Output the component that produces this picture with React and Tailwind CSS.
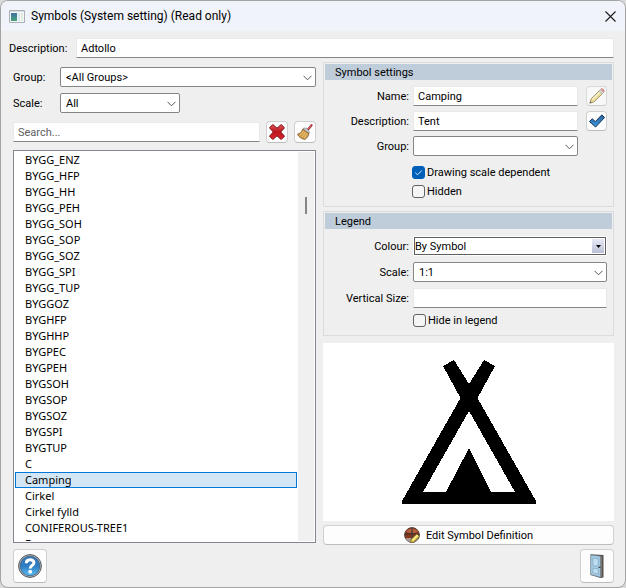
import { useState } from "react";

const names = [
  "BYGG_ENZ", "BYGG_HFP", "BYGG_HH", "BYGG_PEH", "BYGG_SOH", "BYGG_SOP",
  "BYGG_SOZ", "BYGG_SPI", "BYGG_TUP", "BYGGOZ", "BYGHFP", "BYGHHP", "BYGPEC",
  "BYGPEH", "BYGSOH", "BYGSOP", "BYGSOZ", "BYGSPI", "BYGTUP", "C", "Camping",
  "Cirkel", "Cirkel fylld", "CONIFEROUS-TREE1", "Ensam",
];

function Label({ className = "", ...props }) {
  return <label className={`pt-[2px] ${className}`} {...props} />;
}

function TextField({ className = "", ...props }) {
  return (
    <input
      type="text"
      className={`h-5 min-w-0 border border-[#e9e9e9] border-b-[#868686] bg-white px-1 text-black outline-none placeholder:text-[#606060] ${className}`}
      {...props}
    />
  );
}

function Select({ id, options = [], className = "" }) {
  return (
    <span className={`relative flex h-5 ${className}`}>
      <select
        id={id}
        className="w-full appearance-none rounded-[2px] border border-[#858585] bg-white pt-px pr-5 pl-[5px] leading-4 text-black outline-none"
      >
        {options.map((o) => (
          <option key={o}>{o}</option>
        ))}
      </select>
      <svg className="pointer-events-none absolute top-2 right-1 h-[6px] w-[9px]" viewBox="0 0 9 6" fill="none" stroke="#555">
        <path d="M.5 .8 4.5 4.8 8.5 .8" />
      </svg>
    </span>
  );
}

function Check({ label, defaultChecked }) {
  return (
    <label className="flex h-[19px] items-center gap-[2px]">
      <span className="relative flex size-[13px]">
        <input
          type="checkbox"
          defaultChecked={defaultChecked}
          className="peer size-[13px] appearance-none rounded-[3px] border border-[#626262] bg-[#f5f5f5] checked:border-[#005fb8] checked:bg-[#005fb8]"
        />
        <svg className="pointer-events-none absolute inset-0 hidden size-[13px] peer-checked:block" viewBox="0 0 13 13" fill="none" stroke="#d9ecff">
          <path d="M3.3 6.7 5.5 8.8 9.8 4.5" />
        </svg>
      </span>
      <span className="pt-px">{label}</span>
    </label>
  );
}

function IconButton({ label, className = "", children }) {
  return (
    <button
      type="button"
      aria-label={label}
      className={`flex shrink-0 items-center justify-center rounded-[4px] border border-[#d0d0d0] border-b-[#bdbdbd] bg-[#fdfdfd] ${className}`}
    >
      {children}
    </button>
  );
}

function Panel({ title, className = "", children }) {
  return (
    <section className={`shrink-0 border border-[#dcdcdc] p-px ${className}`}>
      <h2 className="h-4 bg-[#bfcddb] pl-[10px] leading-[18px]">{title}</h2>
      {children}
    </section>
  );
}

function AppIcon() {
  return (
    <svg className="h-[13px] w-4" viewBox="0 0 16 13">
      <defs>
        <linearGradient id="app" x2="0" y2="1">
          <stop stopColor="#3f73a3" />
          <stop offset="1" stopColor="#46a178" />
        </linearGradient>
      </defs>
      <path d="M.5 .5h15v12H.5z" fill="#f4f6f7" stroke="#a9b1b7" />
      <path d="M1 1h14v1H1z" fill="#d5dde3" />
      <path d="M2 3h6v8H2z" fill="url(#app)" />
      <path d="M9 3h2v8H9z" fill="#d7e6ee" />
      <path d="M12 3h2v8h-2z" fill="#deeedb" />
    </svg>
  );
}

function DeleteIcon() {
  return (
    <svg className="size-4" viewBox="0 0 16 16">
      <defs>
        <linearGradient id="del" x2="0" y2="1">
          <stop stopColor="#dc5a5a" />
          <stop offset=".5" stopColor="#bd141b" />
          <stop offset="1" stopColor="#e02a32" />
        </linearGradient>
      </defs>
      <path d="M3.800 .5 8 4.200 12.200.5 15.500 3.800 11.700 8l3.800 4.200-3.300 3.300L8 11.800l-4.200 3.700L.5 12.200 4.300 8 .5 3.800z" fill="url(#del)" stroke="#7c0b11" strokeLinejoin="round" />
    </svg>
  );
}

function BroomIcon() {
  return (
    <svg className="size-4" viewBox="0 0 16 16">
      <path d="M14.500 1.200 11 5.500" stroke="#a9323a" strokeWidth="2.200" strokeLinecap="round" />
      <path d="M14.300 1.200 11 5.200" stroke="#e98a88" strokeWidth=".7" />
      <path d="M6.500 4.200c2-.8 5.500 1.400 5.800 4.600L10.500 10 5.600 5.800z" fill="#c4c9d0" stroke="#757b86" strokeWidth=".7" />
      <path d="M5.800 5.200 12 9.600C11.500 12 10 14.200 7.800 15.500 4.500 14.800 1.800 13 .5 10.200 3 9.500 4.800 7.700 5.800 5.200z" fill="#cf9c4c" stroke="#7f5722" strokeWidth=".8" />
      <path d="M6.500 7 3.200 11.400M8.200 8.300 5.200 13M9.900 9.600 7.300 14" stroke="#efcb85" strokeWidth=".9" />
    </svg>
  );
}

function PencilIcon() {
  return (
    <svg className="size-4 shrink-0" viewBox="0 0 16 16">
      <path d="M.8 15.200 2.200 10.800 11 2l3 3-8.800 8.800z" fill="#e8d272" stroke="#8a783e" />
      <path d="M3.500 11.500 12 3" stroke="#fbf3c8" strokeWidth="1.200" />
      <path d="M10.200 2.800 11.600 1.400 14.600 4.400 13.200 5.800z" fill="#c9d2d8" stroke="#74828b" strokeWidth=".6" />
      <path d="M11.600 1.400C12.500.2 13.500.3 14.500 1.300s1.200 2 .1 3.100z" fill="#e07c74" stroke="#a85a56" strokeWidth=".6" />
      <path d="M.8 15.200 1.400 13.200 2.800 14.600z" fill="#222" />
    </svg>
  );
}

function ApplyIcon() {
  return (
    <svg className="size-4 shrink-0" viewBox="0 0 16 16">
      <defs>
        <linearGradient id="ok" x2="0" y2="1">
          <stop stopColor="#28619c" />
          <stop offset="1" stopColor="#3f9ade" />
        </linearGradient>
      </defs>
      <path d="M.5 8.600 3.200 5.800 6.300 8.600 12.800 1.900 15.600 4.500 6.600 14z" fill="url(#ok)" stroke="#12365f" strokeLinejoin="round" />
    </svg>
  );
}

function HelpIcon() {
  return (
    <svg className="size-6" viewBox="0 0 24 24">
      <defs>
        <linearGradient id="help" x2="0" y2="1">
          <stop stopColor="#3d78b4" />
          <stop offset=".5" stopColor="#2d7cc4" />
          <stop offset="1" stopColor="#5cc0f5" />
        </linearGradient>
      </defs>
      <circle cx="12" cy="12" r="11.400" fill="#b4babf" stroke="#50575e" strokeWidth="1" />
      <circle cx="12" cy="12" r="9.800" fill="url(#help)" stroke="#3c5f80" strokeWidth=".8" />
      <path d="M8.300 9.300c0-4.600 7.600-4.500 7.600-.6 0 2.700-3.700 2.800-3.700 5.700" fill="none" stroke="#fff" strokeWidth="3" />
      <circle cx="12.200" cy="17.700" r="1.900" fill="#fff" />
    </svg>
  );
}

function DoorIcon() {
  return (
    <svg className="h-6 w-4" viewBox="0 0 16 24">
      <path d="M1.500 .3 14.500 .9V23.500L11.500 24 1.500 21z" fill="#55524f" />
      <path d="M1.800 1.200 11.300 2.200V23L1.800 20.500z" fill="#a6cce6" stroke="#7f9bad" strokeWidth=".6" />
      <path d="M3.800 4 9.300 4.600v7.600L3.800 11.700zM3.800 14.200 9.300 14.800v5.500L3.800 18.800z" fill="#bcdcf0" stroke="#7fa3bd" strokeWidth=".7" />
      <path d="M12.500 2.500V23" stroke="#8b7f76" strokeWidth=".8" />
      <path d="M9.500 13.400h2" stroke="#3e444a" strokeWidth="1.200" />
    </svg>
  );
}

function EditSymbolIcon() {
  return (
    <svg className="size-4" viewBox="0 0 16 16">
      <circle cx="8" cy="8" r="7.400" fill="#8c3418" stroke="#4a3a34" strokeWidth=".9" />
      <path d="M2 5a7 7 0 0 1 12 0L8 6.500z" fill="#b8603e" />
      <path d="M1.500 11h13A7 7 0 0 1 1.500 11z" fill="#a89b92" />
      <path d="M8 .8v14.400" stroke="#4b403d" strokeWidth="1.500" />
      <path d="M.8 7.500Q8 5.800 15.200 7.500" fill="none" stroke="#3f3633" strokeWidth="1.300" />
      <path d="M6.600 15.400 7.200 12.500 12.800 6.900 15.400 9.500 9.500 15.100z" fill="#ecd24d" stroke="#77652a" strokeWidth=".8" />
      <path d="M8.300 13.300 13.500 8.200" stroke="#fff3a0" strokeWidth="1.200" />
    </svg>
  );
}

function Tent() {
  return (
    <svg className="h-[144px] w-[134px]" viewBox="0 0 134 144" shapeRendering="crispEdges" role="img" aria-label="Tent">
      <path fillRule="evenodd" d="M41 6 52 0 67 24 82 0 93 6 75.500 38 134 141V144H0V141L58.500 38zM67 51 21 132H44L67 88 89 132H113z" />
    </svg>
  );
}

export default function App() {
  const [selected, setSelected] = useState("Camping");
  return (
    <div className="h-screen bg-[#d9d9d9] text-[11px] leading-4 text-black [font-family:Roboto,'Noto_Sans',sans-serif]">
      <main className="flex h-full flex-col overflow-hidden rounded-lg border border-[#a3a3a3] bg-[#efefef]">
        <header className="flex h-[30px] shrink-0 items-center bg-[#f0f3fa] pr-[9px] pl-2">
          <AppIcon />
          <h1 className="ml-[6px] flex-1 text-xs">Symbols (System setting) (Read only)</h1>
          <button type="button" aria-label="Close">
            <svg className="size-[11px]" viewBox="0 0 11 11" stroke="#1a1a1a" strokeWidth="1.100">
              <path d="M.5 .5l10 10M10.500 .5l-10 10" />
            </svg>
          </button>
        </header>

        <div className="flex min-h-0 flex-1 flex-col pt-[7px] pr-[11px] pb-1 pl-3">
          <div className="-ml-1 flex items-center">
            <Label htmlFor="desc" className="w-[67px]">Description:</Label>
            <TextField id="desc" defaultValue="Adtollo" className="flex-1" />
          </div>

          <div className="grid min-h-0 flex-1 grid-cols-[minmax(0,303fr)_minmax(0,291fr)] gap-x-[7px] pt-1">
            <div className="flex min-h-0 flex-col pt-[5px] pb-[2px]">
              <div className="flex items-center">
                <Label htmlFor="group" className="w-[47px]">Group:</Label>
                <Select id="group" options={["<All Groups>"]} className="flex-1" />
              </div>
              <div className="mt-[6px] flex items-center">
                <Label htmlFor="scale" className="w-[47px]">Scale:</Label>
                <Select id="scale" options={["All"]} className="w-[120px]" />
              </div>
              <div className="mt-2 flex items-center gap-[6px]">
                <TextField aria-label="Search" placeholder="Search..." className="flex-1" />
                <IconButton label="Clear search" className="size-[22px]"><DeleteIcon /></IconButton>
                <IconButton label="Purge" className="size-[22px]"><BroomIcon /></IconButton>
              </div>
              <div className="mt-[7px] flex min-h-0 flex-1 border border-[#828790] bg-white p-px [font-family:'Noto_Sans','Open_Sans',sans-serif]">
                <ul role="listbox" aria-label="Symbols" className="min-w-0 flex-1 overflow-hidden">
                  {names.map((n) => (
                    <li
                      key={n}
                      role="option"
                      aria-selected={n === selected}
                      onClick={() => setSelected(n)}
                      className={`h-4 border pl-[9px] leading-[14px] ${n === selected ? "border-[#0078d7] bg-[#d3e6f5]" : "border-transparent"}`}
                    >
                      {n}
                    </li>
                  ))}
                </ul>
                <div className="ml-px w-4 bg-[#f0f0f0] pt-[45px]">
                  <div className="mx-auto h-[17px] w-[2px] bg-[#868686]" />
                </div>
              </div>
            </div>

            <div className="flex min-h-0 flex-col">
              <Panel title="Symbol settings" className="h-[145px]">
                <div className="grid grid-cols-[84px_minmax(0,1fr)_21px] items-center gap-x-1 gap-y-[5px] pt-[6px] pr-[5px]">
                  <Label htmlFor="name" className="text-right">Name:</Label>
                  <TextField id="name" defaultValue="Camping" className="mr-1" />
                  <IconButton label="Rename" className="h-5 opacity-70"><PencilIcon /></IconButton>
                  <Label htmlFor="sdesc" className="text-right">Description:</Label>
                  <TextField id="sdesc" defaultValue="Tent" className="mr-1" />
                  <IconButton label="Apply" className="h-5"><ApplyIcon /></IconButton>
                  <Label htmlFor="sgroup" className="text-right">Group:</Label>
                  <Select id="sgroup" className="mr-1" />
                </div>
                <div className="flex flex-col pt-[7px] pl-[87px]">
                  <Check label="Drawing scale dependent" defaultChecked />
                  <Check label="Hidden" />
                </div>
              </Panel>

              <Panel title="Legend" className="mt-1 h-[125px]">
                <div className="grid grid-cols-[84px_minmax(0,1fr)] items-center gap-x-1 gap-y-[6px] pt-[7px] pr-[5px]">
                  <Label htmlFor="colour" className="text-right">Colour:</Label>
                  <span className="relative flex h-5 border border-white">
                    <select id="colour" className="w-full appearance-none border border-[#5f5f5f] bg-white pt-px text-black outline-none">
                      <option>By Symbol</option>
                    </select>
                    <span className="pointer-events-none absolute top-[2px] right-[2px] bottom-[2px] flex w-3 items-center justify-center bg-linear-to-b from-[#e8ebf6] to-[#b9bfd6]">
                      <svg className="h-[3px] w-[5px]" viewBox="0 0 5 3"><path d="M0 0h5L2.500 3z" /></svg>
                    </span>
                  </span>
                  <Label htmlFor="lscale" className="text-right">Scale:</Label>
                  <Select id="lscale" options={["1:1"]} />
                  <Label htmlFor="vsize" className="text-right">Vertical Size:</Label>
                  <TextField id="vsize" />
                </div>
                <div className="pt-[3px] pl-[88px]">
                  <Check label="Hide in legend" />
                </div>
              </Panel>

              <div className="mt-[7px] flex min-h-0 flex-1 items-center justify-center bg-white">
                <Tent />
              </div>
              <button type="button" className="mt-1 flex h-5 shrink-0 items-center justify-center gap-[6px] rounded-[4px] border border-[#d0d0d0] border-b-[#bdbdbd] bg-[#fdfdfd]">
                <EditSymbolIcon />
                <span className="pt-[2px]">Edit Symbol Definition</span>
              </button>
            </div>
          </div>

          <footer className="flex justify-between pt-1">
            <IconButton label="Help" className="size-[34px]"><HelpIcon /></IconButton>
            <IconButton label="Close dialog" className="size-[34px]"><DoorIcon /></IconButton>
          </footer>
        </div>
      </main>
    </div>
  );
}
